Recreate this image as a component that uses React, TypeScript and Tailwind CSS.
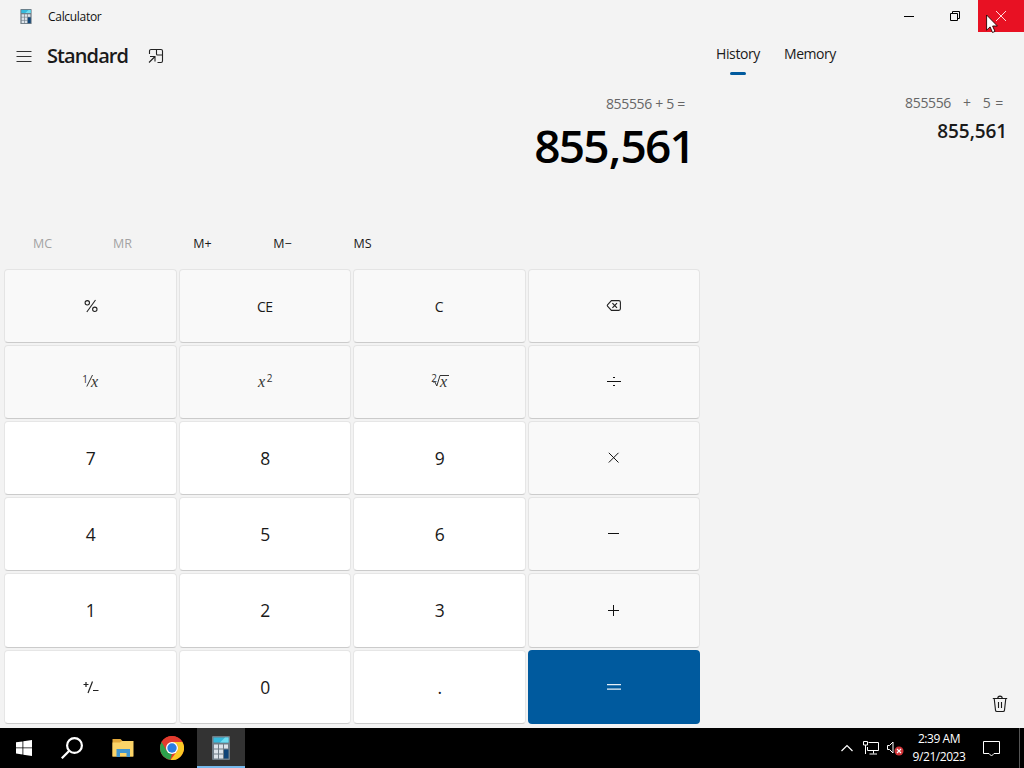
import type { ReactNode } from 'react';
import clsx from 'clsx';

type Key = {
  id: string;
  label: ReactNode;
  tone: 'function' | 'digit' | 'equals';
};

const memoryKeys = [
  { label: 'MC', disabled: true },
  { label: 'MR', disabled: true },
  { label: 'M+', disabled: false },
  { label: 'M−', disabled: false },
  { label: 'MS', disabled: false },
];

function BackspaceIcon() {
  return (
    <svg className="relative left-[0.5px]" width="16" height="12" viewBox="0 0 16 12" fill="none" stroke="#222" strokeWidth="1.1">
      <path d="M5.4 .6h7.400a1.600 1.600 0 0 1 1.600 1.600v6.600a1.600 1.600 0 0 1-1.600 1.600H5.400L1.500 6.100a.9.9 0 0 1 0-1.200z" />
      <path d="M6.400 3.200l4.600 4.600M11 3.200L6.400 7.800" strokeWidth="1.2" />
    </svg>
  );
}

function ReciprocalIcon() {
  return (
    <span className="flex items-baseline text-[#333]">
      <span className="relative -top-[4px] text-[10px]">1</span>
      <svg className="-ml-[2px]" width="7" height="12" viewBox="0 0 7 12" stroke="#333" strokeWidth="1">
        <path d="M6.500 0L.8 11.500" />
      </svg>
      <span className="-ml-[2px] font-['Liberation_Serif',serif] text-[16px] italic">x</span>
    </span>
  );
}

function SquareIcon() {
  return (
    <span className="relative left-[0.5px] flex items-baseline text-[#333]">
      <span className="font-['Liberation_Serif',serif] text-[16px] italic">x</span>
      <span className="relative -top-[5px] ml-[1.5px] text-[10px]">2</span>
    </span>
  );
}

function RootIcon() {
  return (
    <span className="flex items-baseline text-[#333]">
      <span className="relative -top-[5px] text-[10px]">2</span>
      <svg className="-ml-[4px] -mr-[9px]" width="16" height="13" viewBox="0 0 16 13" fill="none" stroke="#333" strokeWidth="1">
        <path d="M.5 8.500l1.300-.8 2 4.300L7 1.500h9" />
      </svg>
      <span className="font-['Liberation_Serif',serif] text-[16px] italic">x</span>
    </span>
  );
}

function PlusMinusIcon() {
  return (
    <svg className="relative left-[0.5px]" width="18" height="14" viewBox="0 0 18 14" fill="none" stroke="#222">
      <path d="M1.500 4.500h5M4 2v5M11 10.500h5.500" strokeWidth="1.2" />
      <path d="M10.500 1.500L6 13" strokeWidth="1.2" />
    </svg>
  );
}

function OperatorIcon({ d, color = '#111', width = 1 }: { d: string; color?: string; width?: number }) {
  return (
    <svg width="16" height="16" viewBox="0 0 16 16" fill="none" stroke={color} strokeWidth={width}>
      <path d={d} />
    </svg>
  );
}

const digit = (label: string): Key => ({
  id: label,
  label: <span className="relative left-[0.5px]">{label}</span>,
  tone: 'digit',
});

const keys: Key[] = [
  {
    id: 'percent',
    label: (
      <svg className="relative left-[0.5px]" width="14" height="14" viewBox="0 0 14 14" fill="none" stroke="#222" strokeWidth="1.1">
        <circle cx="3.300" cy="3.800" r="2.200" />
        <circle cx="10.800" cy="10.300" r="2.200" />
        <path d="M11.500 1L2.800 13" />
      </svg>
    ),
    tone: 'function',
  },
  { id: 'clear-entry', label: <span className="text-[14px] tracking-[-0.5px]">CE</span>, tone: 'function' },
  { id: 'clear', label: <span className="text-[14px]">C</span>, tone: 'function' },
  { id: 'backspace', label: <BackspaceIcon />, tone: 'function' },
  { id: 'reciprocal', label: <ReciprocalIcon />, tone: 'function' },
  { id: 'square', label: <SquareIcon />, tone: 'function' },
  { id: 'root', label: <RootIcon />, tone: 'function' },
  { id: 'divide', label: <OperatorIcon d="M1 7.500h14M7 3.500h2M7 11.500h2" />, tone: 'function' },
  digit('7'),
  digit('8'),
  digit('9'),
  { id: 'multiply', label: <OperatorIcon d="M2.800 2.800l9.700 9.700M12.500 2.800L2.800 12.500" />, tone: 'function' },
  digit('4'),
  digit('5'),
  digit('6'),
  { id: 'minus', label: <OperatorIcon d="M2 7.500h11" />, tone: 'function' },
  digit('1'),
  digit('2'),
  digit('3'),
  { id: 'plus', label: <OperatorIcon d="M2 7.500h11M7.500 2v11" />, tone: 'function' },
  { id: 'negate', label: <PlusMinusIcon />, tone: 'digit' },
  digit('0'),
  digit('.'),
  { id: 'equals', label: <OperatorIcon d="M1 5.600h14M1 10.100h14" color="#e6f0f8" width={1.4} />, tone: 'equals' },
];

function CalculatorIcon({ className }: { className: string }) {
  return (
    <svg className={className} viewBox="0 0 18 24">
      <rect width="18" height="24" rx="1" fill="#6f7c86" />
      <rect x="1.5" y="1.5" width="15" height="5" fill="#35b9dc" />
      <path d="M8 6.500l5-5h3.500v5z" fill="#6fdcf0" />
      <g fill="#dce3ea">
        <rect x="2" y="8.500" width="4" height="4" />
        <rect x="7" y="8.500" width="4" height="4" />
        <rect x="12" y="8.500" width="4" height="4" />
        <rect x="2" y="13.500" width="4" height="4" />
        <rect x="7" y="13.500" width="4" height="4" />
        <rect x="2" y="18.500" width="4" height="4" />
        <rect x="7" y="18.500" width="4" height="4" />
      </g>
      <rect x="12" y="13.500" width="4.500" height="9" fill="#0f4478" />
    </svg>
  );
}

function TitleBar() {
  return (
    <header className="relative flex h-8 shrink-0 items-center">
      <CalculatorIcon className="ml-5 h-[15px] w-[12px]" />
      <span className="relative top-px ml-4 text-[12px] tracking-[-0.3px] text-[#111]">Calculator</span>
      <div className="ml-auto flex h-full">
        <button className="flex w-[46px] items-center justify-center">
          <svg width="10" height="10" viewBox="0 0 10 10" stroke="#000">
            <path d="M0 5.500h10" />
          </svg>
        </button>
        <button className="flex w-[46px] items-center justify-center">
          <svg width="10" height="10" viewBox="0 0 10 10" fill="none" stroke="#000">
            <path d="M.5 2.500h7v7h-7zM2.500 2.500v-2h7v7h-2" />
          </svg>
        </button>
        <button className="flex w-[46px] items-center justify-center bg-[#e81123]">
          <svg width="10" height="10" viewBox="0 0 10 10" stroke="#ffd9dc">
            <path d="M0 0l10 10M10 0L0 10" />
          </svg>
        </button>
      </div>
      {/* Mouse pointer resting on the close button */}
      <svg className="absolute left-[986px] top-[14px] z-10" width="12" height="20" viewBox="0 0 12 20">
        <path d="M.6 1v15.200l3.500-3.300 2.400 5.600 2.500-1.100-2.400-5.400h4.800z" fill="#fff" stroke="#200" strokeWidth="0.9" />
      </svg>
    </header>
  );
}

function Keypad() {
  return (
    <div className="ml-1 grid h-[455px] w-[696px] grid-cols-4 grid-rows-[74px_74px_74px_74px_75px_74px] gap-0.5">
      {keys.map((key) => (
        <button
          key={key.id}
          className={clsx(
            'flex items-center justify-center rounded-[4px] text-[17.5px] text-[#1a1a1a]',
            key.tone === 'function' && 'border border-[#e4e4e4] border-b-[#cbcbcb] bg-[#f9f9f9]',
            key.tone === 'digit' && 'border border-[#e6e6e6] border-b-[#cbcbcb] bg-white',
            key.tone === 'equals' && 'bg-[#005a9e]',
          )}
        >
          {key.label}
        </button>
      ))}
    </div>
  );
}

function Calculator() {
  return (
    <section className="flex w-[704px] flex-col">
      <div className="flex h-12 items-center">
        <svg className="ml-4" width="16" height="12" viewBox="0 0 16 12" stroke="#333">
          <path d="M.5 1.500h15M.5 6.500h15M.5 11.500h15" />
        </svg>
        <h1 className="ml-[15px] w-[81px] text-[20px] font-semibold tracking-[-0.9px] text-[#1a1a1a]">Standard</h1>
        <svg className="ml-5" width="16" height="16" viewBox="0 0 16 16" fill="none" stroke="#222" strokeWidth="1.1">
          <path d="M1.500 6V3a1.500 1.500 0 0 1 1.500-1.500h10A1.500 1.500 0 0 1 14.500 3v10a1.500 1.500 0 0 1-1.500 1.500h-3.500M8.500 1.500v4.500a1 1 0 0 0 1 1h5" />
          <path d="M1 14.500l5.500-5.500M2 8.500h5v5" />
        </svg>
      </div>
      <div className="flex h-[46px] items-center justify-end pr-[19px] text-[14px] tracking-[-0.32px] text-[#666]">
        855556 + 5 =
      </div>
      <div className="-mt-3 flex h-[62px] items-center justify-end pr-[10px] text-[46px] font-semibold tracking-[-1.8px] text-black">
        <span>855</span>
        <span className="ml-px mr-[1px]">,</span>
        <span>561</span>
      </div>
      <div className="mt-[52px] ml-[2.5px] flex h-8 items-center">
        {memoryKeys.map((key) => (
          <button
            key={key.label}
            className={clsx('w-20 text-center text-[12.5px]', key.disabled ? 'text-[#a3a3a3]' : 'text-[#1a1a1a]')}
          >
            {key.label}
          </button>
        ))}
      </div>
      <div className="h-[9px]" />
      <Keypad />
    </section>
  );
}

function HistoryPanel() {
  return (
    <aside className="flex flex-1 flex-col">
      <nav className="flex h-[43px] gap-6 pl-3 text-[14px] text-[#1a1a1a]">
        <div className="flex w-11 flex-col items-center">
          <span className="mt-[11px] tracking-[-0.4px]">History</span>
          <span className="mt-[8px] h-[3px] w-4 shrink-0 rounded-full bg-[#005a9e]" />
        </div>
        <span className="mt-[11px] tracking-[-0.45px]">Memory</span>
      </nav>
      <div className="mt-[18px] flex flex-col items-end">
        <p className="flex pr-[21px] text-[14px] leading-5 tracking-[-0.35px] text-[#666]">
          <span>855556</span>
          <span className="ml-3">+</span>
          <span className="ml-3">5</span>
          <span className="ml-[5px]">=</span>
        </p>
        <p className="mt-1 pr-[17px] text-[19px] leading-[28px] font-semibold tracking-[-0.1px] text-[#1a1a1a]">855,561</p>
      </div>
      <button className="mt-auto mr-4 mb-[15px] self-end">
        <svg width="16" height="18" viewBox="0 0 16 18" fill="none" stroke="#1a1a1a" strokeWidth="1.1">
          <path d="M.8 3.500h14.400M5.800 3.300a2.200 2.200 0 0 1 4.400 0M2.200 3.500l1.300 11.600a1.500 1.500 0 0 0 1.500 1.400h6a1.500 1.500 0 0 0 1.500-1.400l1.300-11.600M6.500 7v6M9.500 7v6" />
        </svg>
      </button>
    </aside>
  );
}

function Taskbar() {
  return (
    <footer className="flex h-10 shrink-0 items-stretch bg-black text-white">
      <button className="flex w-12 items-center justify-center">
        <svg width="16" height="16" viewBox="0 0 16 16" fill="#fff">
          <path d="M0 2.300l6.500-.9v6.100H0zM7.300 1.300L16 0v7.500H7.300zM0 8.300h6.500v6.200L0 13.600zM7.300 8.300H16V16l-8.700-1.300z" />
        </svg>
      </button>
      <button className="flex w-12 items-center justify-center">
        <svg width="22" height="22" viewBox="0 0 22 22" fill="none" stroke="#fff" strokeWidth="2.200">
          <circle cx="13.500" cy="8.500" r="7.400" />
          <path d="M8.300 13.800L.8 21.300" />
        </svg>
      </button>
      <button className="ml-0.5 flex w-[49px] items-center justify-center">
        <svg width="22" height="18" viewBox="0 0 22 18">
          <path d="M.5 0h8l2 2h10.500v15.500H.5z" fill="#e3a83a" />
          <path d="M.5 3.500h7.500l2-1.500h11.500v15.500H.5z" fill="#fcd468" />
          <path d="M4.500 18v-8h13.500v8h-3.500v-4H8v4z" fill="#4296cf" />
        </svg>
      </button>
      <button className="ml-px flex w-12 items-center justify-center">
        <svg width="24" height="24" viewBox="0 0 24 24">
          <circle cx="12" cy="12" r="12" fill="#e33b2e" />
          <path d="M22.400 6A12 12 0 0 1 10.500 23.900L17.200 15 17.500 9 12 6z" fill="#fbc926" />
          <path d="M6.800 15L1.600 6A12 12 0 0 1 22.400 6H12z" fill="#e33b2e" />
          <path d="M1.600 6l5.200 9 5.200 3-1.800 5.800A12 12 0 0 1 1.600 6z" fill="#2da24c" />
          <circle cx="12" cy="12" r="6" fill="#fff" />
          <circle cx="12" cy="12" r="4.700" fill="#2a7de1" />
        </svg>
      </button>
      <button className="ml-px flex w-12 items-center justify-center border-b-2 border-[#76b9ed] bg-[#333]">
        <CalculatorIcon className="relative top-px h-6 w-[18px]" />
      </button>

      <div className="ml-auto flex items-center">
        <svg width="12" height="8" viewBox="0 0 12 8" fill="none" stroke="#fff" strokeWidth="1.200">
          <path d="M.5 7L6 1.500 11.500 7" />
        </svg>
        <svg className="ml-[10px]" width="17" height="14" viewBox="0 0 17 14" fill="none" stroke="#fff">
          <path d="M5.500 1.500h10v8h-11V6M10.500 9.500v3M6.500 13h7.500M.5.500h4v3.500h-4zM2.500 4v9" />
        </svg>
        <svg className="ml-[7px]" width="17" height="16" viewBox="0 0 17 16" fill="none">
          <path d="M.5 5.500h2l3.500-3.500v11L2.500 9.500h-2z" stroke="#fff" />
          <circle cx="12" cy="11" r="4.500" fill="#d13438" />
          <path d="M10 9l4 4M14 9l-4 4" stroke="#fff" strokeWidth="1.100" />
        </svg>
        <div className="ml-[5px] w-[60px] text-center text-[12px] leading-[18px] tracking-[-0.45px] whitespace-nowrap">
          <div>2:39 AM</div>
          <div>9/21/2023</div>
        </div>
        <svg className="ml-[14px] mr-[19px]" width="17" height="17" viewBox="0 0 17 17" fill="none" stroke="#fff">
          <path d="M.5 1.500h16v12h-5.500L8.500 16 6 13.500H.5z" />
        </svg>
        <div className="mr-1 h-10 w-px bg-[#555]" />
      </div>
    </footer>
  );
}

export default function App() {
  return (
    <div className="flex h-[768px] w-[1024px] flex-col overflow-hidden bg-[#f3f3f3] font-['Open_Sans','Noto_Sans',sans-serif]">
      <TitleBar />
      <main className="flex min-h-0 flex-1">
        <Calculator />
        <HistoryPanel />
      </main>
      <Taskbar />
    </div>
  );
}
